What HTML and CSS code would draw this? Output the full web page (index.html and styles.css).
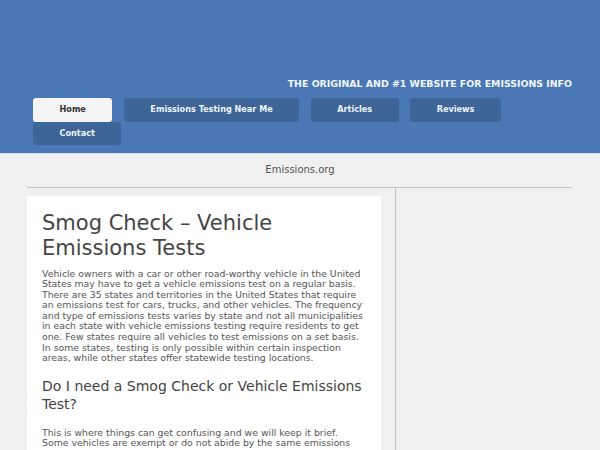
FILE: index.html
```html
<!DOCTYPE html>
<html>
<head>
<meta charset="utf-8">
<link rel="stylesheet" href="styles.css">
</head>
<body>
<header class="site-header">
  <div class="tagline">The Original and #1 Website for Emissions Info</div>
  <nav class="nav">
    <a class="nav-item active" href="#">Home</a>
    <a class="nav-item" href="#">Emissions Testing Near Me</a>
    <a class="nav-item" href="#">Articles</a>
    <a class="nav-item" href="#">Reviews</a>
    <a class="nav-item" href="#">Contact</a>
  </nav>
</header>
<div class="site-name">Emissions.org</div>
<div class="container">
  <main class="main">
    <article class="card">
      <h1 class="title">Smog Check – Vehicle Emissions Tests</h1>
      <p class="text">Vehicle owners with a car or other road-worthy vehicle in the United States may have to get a vehicle emissions test on a regular basis. There are 35 states and territories in the United States that require an emissions test for cars, trucks, and other vehicles. The frequency and type of emissions tests varies by state and not all municipalities in each state with vehicle emissions testing require residents to get one. Few states require all vehicles to test emissions on a set basis. In some states, testing is only possible within certain inspection areas, while other states offer statewide testing locations.</p>
      <h2 class="subtitle">Do I need a Smog Check or Vehicle Emissions Test?</h2>
      <p class="text">This is where things can get confusing and we will keep it brief. Some vehicles are exempt or do not abide by the same emissions standards as others, and each state has its own rules for which vehicles need testing.</p>
    </article>
  </main>
  <aside class="sidebar"></aside>
</div>
</body>
</html>
```

FILE: styles.css
```css
html, body {
  margin: 0;
  padding: 0;
}
body {
  background: #f0f0f0;
  font-family: "DejaVu Sans", sans-serif;
  color: #555;
  height: 450px;
  overflow: hidden;
}
.site-header {
  background: #4a78b5;
  height: 153px;
  border-bottom: 1px solid #d3deeb;
  padding: 0 28px 0 33px;
  display: flex;
  flex-direction: column;
}
.tagline {
  margin-top: 78px;
  text-align: right;
  color: #f2f5fa;
  font-weight: bold;
  text-transform: uppercase;
  font-size: 9.4px;
  line-height: 12px;
}
.nav {
  margin-top: 8px;
  display: flex;
  flex-wrap: wrap;
}
.nav-item {
  display: block;
  background: #3d6598;
  color: #eef2f8;
  text-decoration: none;
  font-weight: bold;
  font-size: 8.15px;
  line-height: 23.5px;
  height: 23.5px;
  padding: 0 26.5px;
  margin-right: 11.5px;
  border-radius: 3px;
}
.nav-item.active {
  background: #f5f5f5;
  color: #333;
}
.site-name {
  text-align: center;
  font-size: 10px;
  color: #555;
  padding: 10px 0 0;
  height: 23px;
}
.container {
  margin: 0 28px 0 27px;
  border-top: 1px solid #c4c4c4;
  display: flex;
}
.main {
  width: 368px;
  padding-top: 8px;
  border-right: 1px solid #c4c4c4;
}
.card {
  background: #fff;
  width: 354px;
  box-sizing: border-box;
  padding: 14.5px 11px 20px 15px;
}
.title {
  margin: 0;
  font-size: 21px;
  font-weight: normal;
  color: #444;
  line-height: 25px;
}
.text {
  margin: 8.2px 0 0;
  font-size: 9.34px;
  line-height: 10.54px;
}
.subtitle {
  margin: 13.4px 0 0;
  font-size: 14px;
  font-weight: normal;
  color: #444;
  line-height: 18px;
}
.subtitle + .text {
  margin-top: 14.7px;
  margin-right: 4px;
}
.sidebar {
  flex: 1;
}
```
